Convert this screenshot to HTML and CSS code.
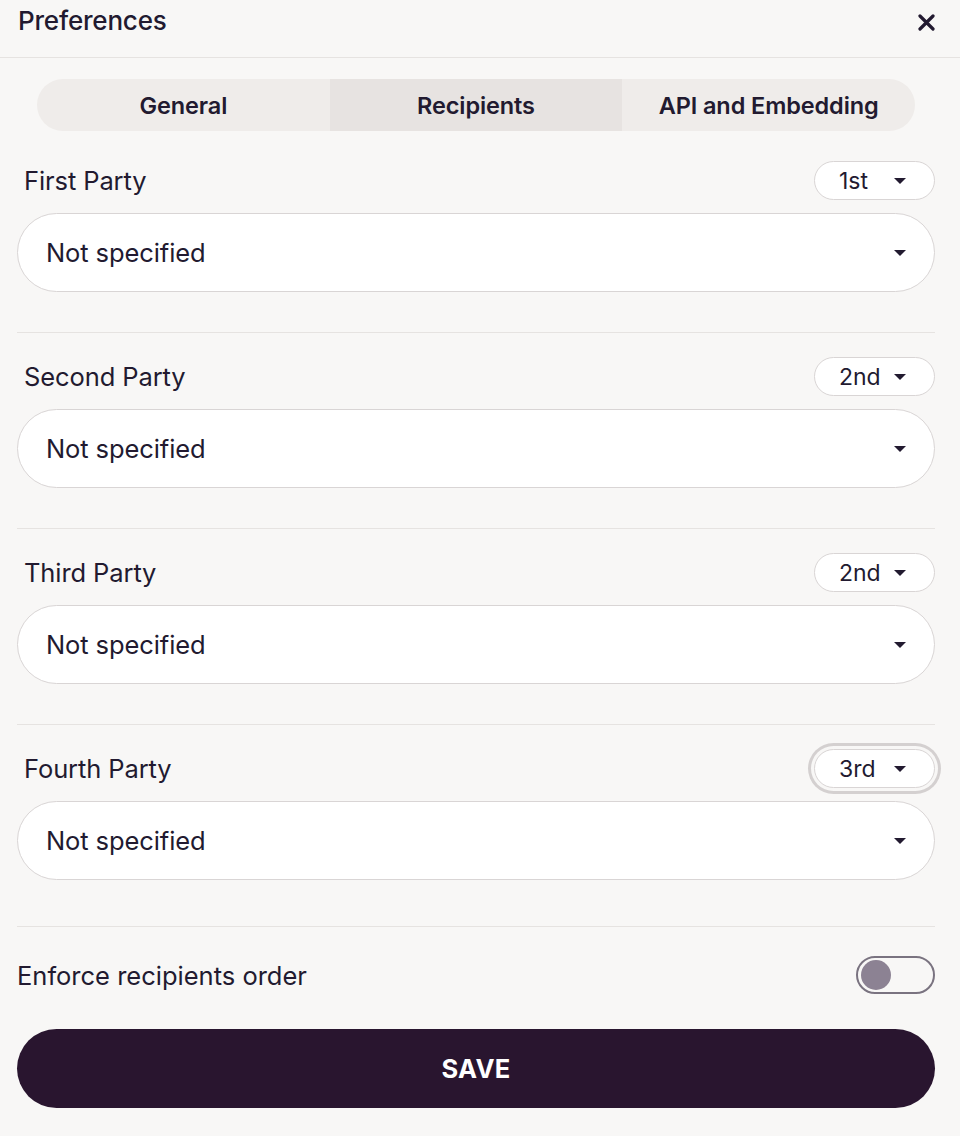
FILE: index.html
```html
<!DOCTYPE html>
<html lang="en">
<head>
<meta charset="utf-8">
<title>Preferences</title>
<link rel="stylesheet" href="styles.css">
</head>
<body>
<div class="dialog">
  <header class="header">
    <h1 class="title">Preferences</h1>
    <button class="close" aria-label="Close">
      <svg width="17" height="17" viewBox="0 0 17 17"><path d="M2 2L15 15M15 2L2 15" stroke="#221a30" stroke-width="3.2" stroke-linecap="round"/></svg>
    </button>
  </header>
  <div class="content">
    <nav class="tabs">
      <div class="tab">General</div>
      <div class="tab active">Recipients</div>
      <div class="tab">API and Embedding</div>
    </nav>

    <section class="party first">
      <div class="party-head">
        <span class="party-label">First Party</span>
        <div class="badge"><span>1st</span><span class="caret"></span></div>
      </div>
      <div class="select"><span>Not specified</span><span class="caret"></span></div>
    </section>

    <section class="party">
      <div class="party-head">
        <span class="party-label">Second Party</span>
        <div class="badge"><span>2nd</span><span class="caret"></span></div>
      </div>
      <div class="select"><span>Not specified</span><span class="caret"></span></div>
    </section>

    <section class="party">
      <div class="party-head">
        <span class="party-label">Third Party</span>
        <div class="badge"><span>2nd</span><span class="caret"></span></div>
      </div>
      <div class="select"><span>Not specified</span><span class="caret"></span></div>
    </section>

    <section class="party last">
      <div class="party-head">
        <span class="party-label">Fourth Party</span>
        <div class="badge focused"><span>3rd</span><span class="caret"></span></div>
      </div>
      <div class="select"><span>Not specified</span><span class="caret"></span></div>
    </section>

    <div class="enforce">
      <span class="enforce-label">Enforce recipients order</span>
      <div class="toggle"><span class="knob"></span></div>
    </div>

    <button class="save">SAVE</button>
  </div>
</div>
</body>
</html>
```

FILE: styles.css
```css
* { box-sizing: border-box; }
html, body {
  margin: 0;
  padding: 0;
  background: #f8f7f6;
}
body {
  font-family: Inter, "Noto Sans", sans-serif;
  color: #221a30;
}
.header {
  height: 58px;
  border-bottom: 1px solid #e6e3e1;
  display: flex;
  align-items: flex-start;
  justify-content: space-between;
  padding: 0 25px 0 18px;
}
.title {
  margin: 0;
  font-size: 26px;
  font-weight: 500;
  line-height: 42px;
  letter-spacing: -0.2px;
}
.close {
  border: 0;
  background: none;
  padding: 0;
  margin-top: 14px;
  width: 17px;
  height: 17px;
  display: flex;
}
.content {
  padding: 0 25px 0 17px;
}
.tabs {
  margin: 21px 20px 0 20px;
  height: 52px;
  border-radius: 26px;
  background: #efecea;
  display: grid;
  grid-template-columns: 1fr 1fr 1fr;
  overflow: hidden;
}
.tab {
  display: flex;
  align-items: center;
  justify-content: center;
  font-size: 23.5px;
  font-weight: 600;
  letter-spacing: -0.1px;
}
.tab.active {
  background: #e7e3e1;
}
.party {
  padding: 24px 0 40px 0;
  border-bottom: 1px solid #e6e3e1;
}
.party.first { padding-top: 30px; }
.party.last { padding-bottom: 46px; }
.party-head {
  display: flex;
  align-items: center;
  justify-content: space-between;
  height: 39px;
  padding-left: 7px;
}
.party-label {
  font-size: 25.5px;
  font-weight: 400;
  letter-spacing: -0.1px;
}
.badge {
  width: 121px;
  height: 39px;
  border: 1px solid #d9d5d5;
  border-radius: 20px;
  background: #fff;
  display: flex;
  align-items: center;
  justify-content: space-between;
  padding: 0 28px 0 24px;
  font-size: 23px;
}
.badge.focused {
  box-shadow: 0 0 0 3px #f8f7f6, 0 0 0 6px #d4d0d0;
}
.caret {
  width: 0;
  height: 0;
  border-left: 6px solid transparent;
  border-right: 6px solid transparent;
  border-top: 6px solid #221a30;
}
.select {
  margin-top: 13px;
  height: 79px;
  border: 1px solid #d9d5d5;
  border-radius: 40px;
  background: #fff;
  display: flex;
  align-items: center;
  justify-content: space-between;
  padding: 0 28px 0 28px;
  font-size: 25.5px;
  font-weight: 400;
  letter-spacing: -0.1px;
}
.enforce {
  display: flex;
  align-items: center;
  justify-content: space-between;
  margin-top: 29px;
  height: 38px;
}
.enforce-label {
  font-size: 25.5px;
}
.toggle {
  width: 79px;
  height: 38px;
  border: 2px solid #7a7380;
  border-radius: 19px;
  display: flex;
  align-items: center;
  padding-left: 3px;
}
.knob {
  width: 30px;
  height: 30px;
  border-radius: 50%;
  background: #8c8293;
}
.save {
  display: block;
  width: 100%;
  margin-top: 35px;
  height: 79px;
  border: 0;
  border-radius: 40px;
  background: #29152f;
  color: #fff;
  font-family: Inter, "Noto Sans", sans-serif;
  font-size: 25.5px;
  font-weight: 700;
  letter-spacing: 0.3px;
}
```
